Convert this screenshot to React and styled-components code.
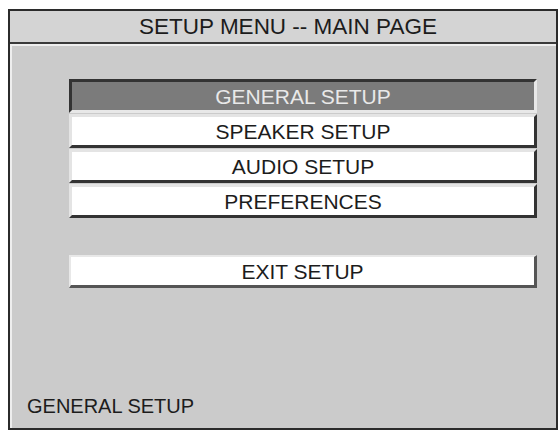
import React from 'react'
import styled, { createGlobalStyle } from 'styled-components'

const GlobalStyle = createGlobalStyle`
  html, body {
    margin: 0;
    padding: 0;
    background: #ffffff;
  }
  body {
    font-family: "Liberation Sans", Arial, sans-serif;
    color: #1c1c1c;
  }
`

const menu = [
  { label: 'GENERAL SETUP', active: true },
  { label: 'SPEAKER SETUP' },
  { label: 'AUDIO SETUP' },
  { label: 'PREFERENCES' },
]

const App = () => {
  return (
    <>
      <GlobalStyle />
      <Frame>
        <TitleBar>SETUP MENU -- MAIN PAGE</TitleBar>
        <Body>
          <MenuList>
            {menu.map(item => (
              <MenuItem key={item.label} $active={item.active}>
                {item.label}
              </MenuItem>
            ))}
          </MenuList>
          <ExitItem>EXIT SETUP</ExitItem>
          <StatusLine>GENERAL SETUP</StatusLine>
        </Body>
      </Frame>
    </>
  )
}

export default App

const Frame = styled.div`
  box-sizing: border-box;
  margin: 9px 0 0 8px;
  width: 550px;
  height: 421px;
  border: 2px solid #2b2b2b;
  display: flex;
  flex-direction: column;
  background: #cdcdcd;
`

const TitleBar = styled.div`
  box-sizing: border-box;
  height: 33px;
  flex-shrink: 0;
  border-bottom: 2px solid #3a3a3a;
  background: #d4d4d4;
  display: flex;
  align-items: center;
  justify-content: center;
  font-size: 22.5px;
  padding: 1px 0 0 10px;
`

const Body = styled.div`
  flex: 1;
  display: flex;
  flex-direction: column;
  background: #cbcbcb;
  border-top: 2px solid #eeeeee;
  border-left: 2px solid #eeeeee;
  padding: 33px 19px 10px 57px;
`

const MenuList = styled.div`
  display: flex;
  flex-direction: column;
  gap: 1px;
`

const MenuItem = styled.div`
  box-sizing: border-box;
  height: 34px;
  display: flex;
  align-items: center;
  justify-content: center;
  font-size: 21px;
  padding-top: 1px;
  background: ${p => (p.$active ? '#7b7b7b' : '#ffffff')};
  color: ${p => (p.$active ? '#e9e9e9' : '#1c1c1c')};
  border-style: solid;
  border-width: 3px;
  border-color: ${p =>
    p.$active
      ? '#333333 #e8e8e8 #e8e8e8 #333333'
      : '#e4e4e4 #333333 #333333 #e4e4e4'};
`

const ExitItem = styled(MenuItem)`
  margin-top: 37px;
  height: 33px;
  border-width: 2px 3px 3px 2px;
  border-color: #e8e8e8 #555555 #555555 #e8e8e8;
`

const StatusLine = styled.div`
  margin-top: auto;
  margin-left: -42px;
  height: 24px;
  line-height: 24px;
  font-size: 20px;
`
